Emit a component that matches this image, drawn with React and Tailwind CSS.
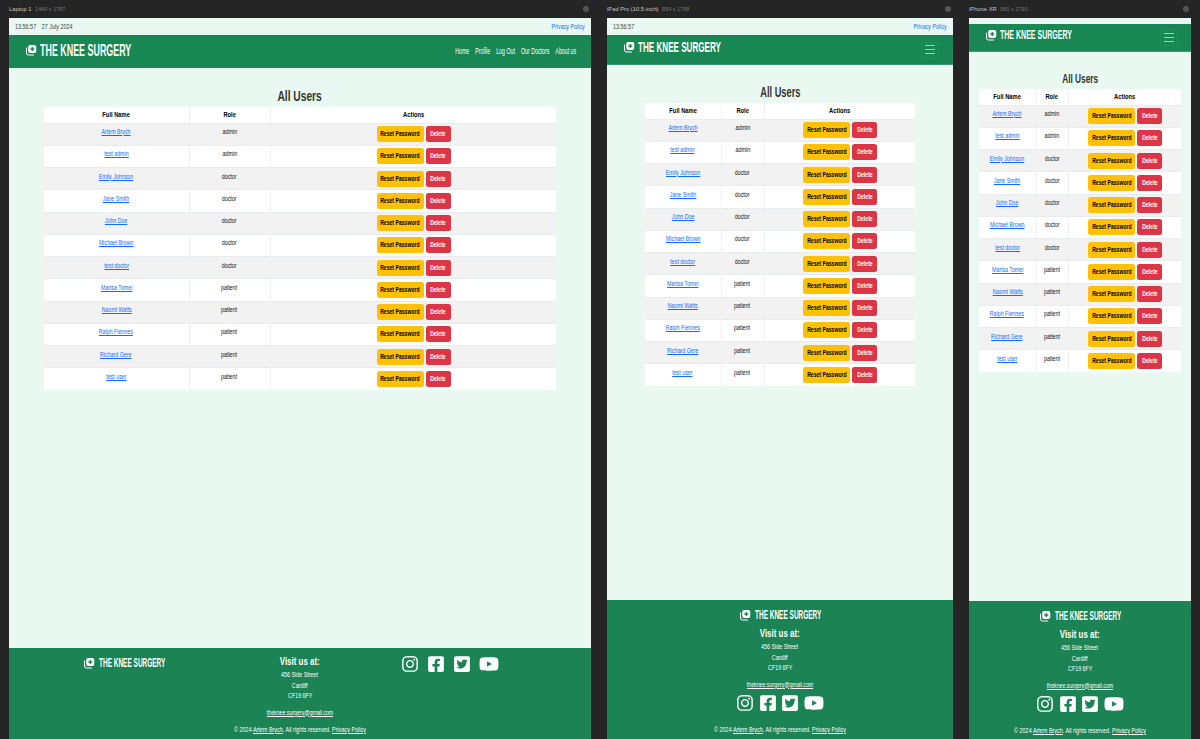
import React from "react";
import { FaInstagram, FaFacebookSquare, FaTwitterSquare, FaYoutube } from "react-icons/fa";

const users = [
  ["Artem Brych", "admin"],
  ["test admin", "admin"],
  ["Emily Johnson", "doctor"],
  ["Jane Smith", "doctor"],
  ["John Doe", "doctor"],
  ["Michael Brown", "doctor"],
  ["test doctor", "doctor"],
  ["Marisa Tomei", "patient"],
  ["Naomi Watts", "patient"],
  ["Ralph Fiennes", "patient"],
  ["Richard Gere", "patient"],
  ["test user", "patient"],
];

// No condensed family is installed, so condensed text is real text squeezed horizontally.
function C({ children, cls = "scale-x-[.67]" }) {
  return <span className={`inline-block whitespace-nowrap ${cls}`}>{children}</span>;
}

function Logo({ size }) {
  return (
    <svg width={size} height={size} viewBox="0 0 24 24" fill="none" className="shrink-0">
      <path d="M3 8v10a4 4 0 0 0 4 4h10" stroke="#fff" strokeWidth="2" strokeLinecap="round" />
      <path fillRule="evenodd" clipRule="evenodd" fill="#fff" d="M10 2h9a3.500 3.500 0 0 1 3.500 3.500v9A3.500 3.500 0 0 1 19 18h-9a3.500 3.500 0 0 1-3.500-3.500v-9A3.500 3.500 0 0 1 10 2Zm3.300 4v2.700h-2.700v2.600h2.700V14h2.600v-2.700h2.700V8.700h-2.700V6Z" />
    </svg>
  );
}

function Table({ cols, widthClass }) {
  return (
    <table className={`table-fixed border-collapse bg-white text-center text-[8px] text-black ${widthClass}`}>
      <colgroup>
        <col className={cols[0]} />
        <col className={cols[1]} />
        <col className={cols[2]} />
      </colgroup>
      <thead>
        <tr className="h-[16px] font-bold">
          <th className="border-r border-[#eef0f2]"><C cls="scale-x-[.72]">Full Name</C></th>
          <th className="border-r border-[#eef0f2]"><C cls="scale-x-[.72]">Role</C></th>
          <th><C cls="scale-x-[.72]">Actions</C></th>
        </tr>
      </thead>
      <tbody>
        {users.map(([name, role], i) => (
          <tr key={name} className={`h-[22.25px] border-t border-[#e9ecef] ${i % 2 === 0 ? "bg-[#f2f2f2]" : "bg-white"}`}>
            <td className="border-r border-[#eef0f2] pb-[4px] align-middle">
              <a href="#" className="text-[#0d6efd] underline"><C cls="scale-x-[.66] underline">{name}</C></a>
            </td>
            <td className="border-r border-[#eef0f2] pb-[4px] align-middle text-[#111]"><C>{role}</C></td>
            <td className="align-middle">
              <div className="flex justify-center gap-[2px] pl-[1px]">
                <span className="flex h-[16px] w-[47px] items-center justify-center rounded-[2.5px] bg-[#ffc107] font-bold text-black"><C cls="scale-x-[.64]">Reset Password</C></span>
                <span className="flex h-[16px] w-[25px] items-center justify-center rounded-[2.5px] bg-[#dc3545] font-bold text-white"><C cls="scale-x-[.64]">Delete</C></span>
              </div>
            </td>
          </tr>
        ))}
      </tbody>
    </table>
  );
}

function Socials({ gapCls }) {
  return (
    <div className={`flex items-center justify-center text-white ${gapCls}`}>
      <FaInstagram size={18} />
      <FaFacebookSquare size={18} />
      <FaTwitterSquare size={18} />
      <FaYoutube size={20} />
    </div>
  );
}

function Address() {
  return (
    <div className="pt-[1px] text-center text-white">
      <div className="text-[11px] font-bold leading-[13px]"><C cls="scale-x-[.72]">Visit us at:</C></div>
      <div className="mt-[2px] text-[8px] leading-[10.5px]">
        <div><C>456 Side Street</C></div>
        <div><C>Cardiff</C></div>
        <div><C>CF19 6FY</C></div>
      </div>
      <div className="mt-[6px] text-[8px] leading-[10px]">
        <a href="#" className="underline"><C cls="scale-x-[.65] underline">theknee.surgery@gmail.com</C></a>
      </div>
    </div>
  );
}

function Copy({ cls }) {
  return (
    <div className={`text-center text-[8px] leading-[10px] text-white ${cls}`}>
      <C cls="scale-x-[.68]">
        © 2024 <a href="#" className="underline">Artem Brych</a>. All rights reserved. <a href="#" className="underline">Privacy Policy</a>
      </C>
    </div>
  );
}

function FooterLogo() {
  return (
    <div className="flex items-center justify-center gap-[4px] text-white">
      <Logo size={12} />
      <span className="w-[67px] text-[12px] font-bold leading-[14px]"><C cls="origin-left scale-x-[.54]">THE KNEE SURGERY</C></span>
    </div>
  );
}

function StackedFooter({ cls, copyCls }) {
  return (
    <footer className={`flex flex-col bg-[#1b8354] pt-[8px] ${cls}`}>
      <FooterLogo />
      <div className="mt-[4px]"><Address /></div>
      <div className="mt-[3px]"><Socials gapCls="gap-[4.5px]" /></div>
      <Copy cls={copyCls} />
    </footer>
  );
}

function Toggler() {
  return (
    <div className="flex h-[16px] w-[18px] flex-col items-center justify-center gap-[3px] rounded-[2px] border border-white/5">
      <span className="h-px w-[10px] bg-white/60" />
      <span className="h-px w-[10px] bg-white/60" />
      <span className="h-px w-[10px] bg-white/60" />
    </div>
  );
}

function Frame({ label, size, width, children }) {
  return (
    <section className={`flex h-full flex-col ${width}`}>
      <div className="flex h-[18px] items-center justify-between text-[5.5px]">
        <span><span className="text-[5.8px] text-[#c4c4c4]">{label}</span> <span className="ml-[2px] text-[#777]">{size}</span></span>
        <span className="mr-[2px] size-[6px] rounded-full bg-[#555]" />
      </div>
      <div className="flex min-h-0 flex-1 flex-col bg-[#e9f8f0]">{children}</div>
    </section>
  );
}

function TopBar({ children }) {
  return (
    <div className="flex h-[17px] items-center justify-between px-[6px] text-[8px] text-[#444]">
      <C cls="origin-left scale-x-[.68]">{children}</C>
      <a href="#" className="text-[#0d6efd]"><C cls="origin-right scale-x-[.67]">Privacy Policy</C></a>
    </div>
  );
}

function Brand({ textCls, width, gapCls = "" }) {
  return (
    <div className={`flex items-center gap-[3px] ${gapCls}`}>
      <Logo size={12} />
      <span className={`font-bold ${textCls} ${width}`}><C cls="origin-left scale-x-[.54]">THE KNEE SURGERY</C></span>
    </div>
  );
}

export default function App() {
  return (
    <div className="flex h-[739px] w-[1200px] gap-[16px] overflow-hidden bg-[#252525] pl-[9px] font-['Liberation_Sans',sans-serif]">
      <Frame label="Laptop 1" size="1440 x 1787" width="w-[582px]">
        <TopBar>13:56:57 <span className="ml-[6px]">27 July 2024</span></TopBar>
        <nav className="flex h-[33px] items-center justify-between bg-[#198754] pl-[16px] pr-[15px] text-white">
          <Brand textCls="text-[16.5px] leading-[20px]" width="w-[93px]" gapCls="pb-[4px]" />
          <div className="flex origin-right scale-x-[.62] gap-[9.7px] whitespace-nowrap text-[8.5px]">
            <span>Home</span><span>Profile</span><span>Log Out</span><span>Our Doctors</span><span>About us</span>
          </div>
        </nav>
        <main className="flex flex-1 flex-col items-center pt-[18px]">
          <h1 className="pb-[1px] text-[15.5px] font-bold leading-[20px] text-[#333]"><C cls="scale-x-[.66]">All Users</C></h1>
          <Table widthClass="w-[512px]" cols={["w-[145px]", "w-[81px]", "w-[286px]"]} />
        </main>
        <footer className="h-[91px] bg-[#1b8354] pt-[6px]">
          <div className="grid grid-cols-[230px_122px_180px]">
            <div className="pt-[2px]"><FooterLogo /></div>
            <Address />
            <div className="pr-[2px]"><Socials gapCls="gap-[8px]" /></div>
          </div>
          <Copy cls="mt-[7px]" />
        </footer>
      </Frame>

      <Frame label="iPad Pro (10.5-inch)" size="854 x 1768" width="w-[346px]">
        <TopBar>13:56:57</TopBar>
        <nav className="flex h-[30px] items-center justify-between border-b border-[#3a9a6e] bg-[#198754] pl-[16px] pr-[14px] text-white">
          <Brand textCls="text-[15px] leading-[18px]" width="w-[81px]" gapCls="pb-[5px]" />
          <Toggler />
        </nav>
        <main className="flex flex-1 flex-col items-center pt-[17px]">
          <h1 className="pb-[1px] text-[14px] font-bold leading-[20px] text-[#333]"><C cls="scale-x-[.66]">All Users</C></h1>
          <Table widthClass="w-[270px]" cols={["w-[76px]", "w-[43px]", "w-[151px]"]} />
        </main>
        <StackedFooter cls="h-[139px]" copyCls="mt-[12px]" />
      </Frame>

      <Frame label="iPhone XR" size="560 x 1790" width="w-[222px]">
        <div className="h-[6px]" />
        <nav className="flex h-[28px] items-center justify-between border-b border-[#3a9a6e] bg-[#198754] pl-[16px] pr-[13px] text-white">
          <Brand textCls="text-[13px] leading-[16px]" width="w-[70px]" gapCls="pb-[5px]" />
          <Toggler />
        </nav>
        <main className="flex flex-1 flex-col items-center pt-[17px]">
          <h1 className="pb-[1px] text-[13px] font-bold leading-[19px] text-[#333]"><C cls="scale-x-[.64]">All Users</C></h1>
          <Table widthClass="w-[202px]" cols={["w-[57px]", "w-[32px]", "w-[113px]"]} />
        </main>
        <StackedFooter cls="h-[138px]" copyCls="mt-[12px]" />
      </Frame>
    </div>
  );
}
